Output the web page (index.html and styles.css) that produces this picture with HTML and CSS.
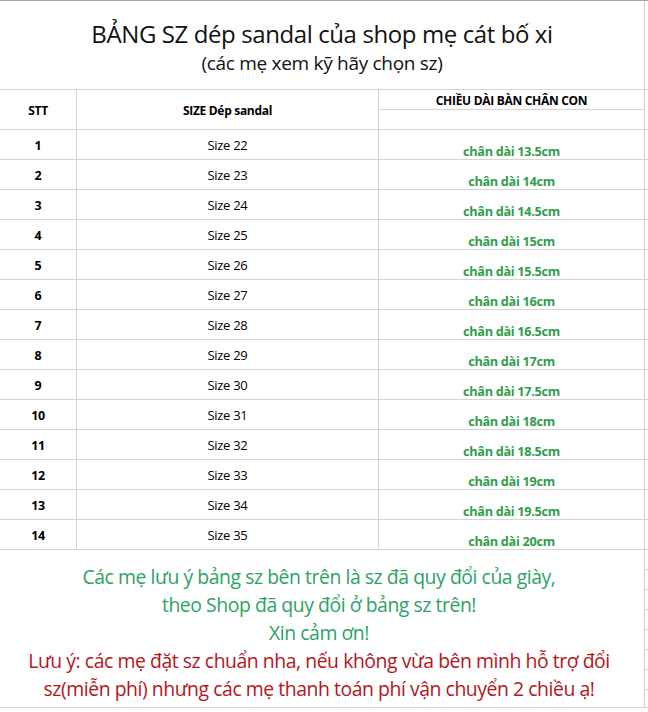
FILE: index.html
```html
<!DOCTYPE html>
<html lang="vi">
<head>
<meta charset="utf-8">
<title>Bảng size dép sandal</title>
<link rel="stylesheet" href="styles.css">
</head>
<body>
<div class="sheet">
  <div class="band title-band">
    <div class="title-block">
      <div class="title">BẢNG SZ dép sandal của shop mẹ cát bố xi</div>
      <div class="subtitle">(các mẹ xem kỹ hãy chọn sz)</div>
    </div>
    <div class="side"></div>
  </div>
  <div class="grid">
    <div class="cell head c1">STT</div>
    <div class="cell head c2">SIZE Dép sandal</div>
    <div class="cell head c3 split">
      <div class="split-top">CHIỀU DÀI BÀN CHÂN CON</div>
      <div class="split-bottom"></div>
    </div>
    <div class="cell pad"></div>

    <div class="cell num">1</div><div class="cell size">Size 22</div><div class="cell len">chân dài 13.5cm</div><div class="cell pad"></div>
    <div class="cell num">2</div><div class="cell size">Size 23</div><div class="cell len">chân dài 14cm</div><div class="cell pad"></div>
    <div class="cell num">3</div><div class="cell size">Size 24</div><div class="cell len">chân dài 14.5cm</div><div class="cell pad"></div>
    <div class="cell num">4</div><div class="cell size">Size 25</div><div class="cell len">chân dài 15cm</div><div class="cell pad"></div>
    <div class="cell num">5</div><div class="cell size">Size 26</div><div class="cell len">chân dài 15.5cm</div><div class="cell pad"></div>
    <div class="cell num">6</div><div class="cell size">Size 27</div><div class="cell len">chân dài 16cm</div><div class="cell pad"></div>
    <div class="cell num">7</div><div class="cell size">Size 28</div><div class="cell len">chân dài 16.5cm</div><div class="cell pad"></div>
    <div class="cell num">8</div><div class="cell size">Size 29</div><div class="cell len">chân dài 17cm</div><div class="cell pad"></div>
    <div class="cell num">9</div><div class="cell size">Size 30</div><div class="cell len">chân dài 17.5cm</div><div class="cell pad"></div>
    <div class="cell num">10</div><div class="cell size">Size 31</div><div class="cell len">chân dài 18cm</div><div class="cell pad"></div>
    <div class="cell num">11</div><div class="cell size">Size 32</div><div class="cell len">chân dài 18.5cm</div><div class="cell pad"></div>
    <div class="cell num">12</div><div class="cell size">Size 33</div><div class="cell len">chân dài 19cm</div><div class="cell pad"></div>
    <div class="cell num">13</div><div class="cell size">Size 34</div><div class="cell len">chân dài 19.5cm</div><div class="cell pad"></div>
    <div class="cell num">14</div><div class="cell size">Size 35</div><div class="cell len">chân dài 20cm</div><div class="cell pad"></div>
  </div>
  <div class="band notes-band">
    <div class="notes">
      <p class="note green">Các mẹ lưu ý bảng sz bên trên là sz đã quy đổi của giày,</p>
      <p class="note green">theo Shop đã quy đổi ở bảng sz trên!</p>
      <p class="note green">Xin cảm ơn!</p>
      <p class="note red">Lưu ý: các mẹ đặt sz chuẩn nha, nếu không vừa bên mình hỗ trợ đổi</p>
      <p class="note red">sz(miễn phí) nhưng các mẹ thanh toán phí vận chuyển 2 chiều ạ!</p>
    </div>
    <div class="side side-lines"></div>
  </div>
</div>
</body>
</html>
```
FILE: styles.css
```css
* { box-sizing: border-box; }
html, body { margin: 0; padding: 0; background: #fff; }
body {
  font-family: "Open Sans", "Noto Sans", sans-serif;
  color: #000;
  width: 648px;
  height: 712px;
  overflow: hidden;
}
.sheet {
  width: 648px;
  border-top: 1px solid #a6a6a6;
}
.band {
  display: flex;
}
.side {
  flex: 1;
  border-bottom: 1px solid #d4d4d4;
}
.side-lines {
  border-bottom: 1px solid #d4d4d4;
  background: repeating-linear-gradient(to bottom, transparent 0, transparent 19px, #d4d4d4 19px, #d4d4d4 20px);
}
.title-block {
  width: 645px;
  height: 89px;
  border-bottom: 1px solid #d4d4d4;
  border-right: 1px solid #cfcfcf;
  display: flex;
  flex-direction: column;
  align-items: center;
  padding-top: 18px;
}
.title {
  font-size: 24px;
  line-height: 30px;
  letter-spacing: -0.4px;
  color: #111;
}
.subtitle {
  font-size: 19px;
  line-height: 28px;
  letter-spacing: -0.3px;
  color: #111;
}
.grid {
  display: grid;
  grid-template-columns: 77px 302px 266px 1fr;
  grid-auto-rows: 30px;
  grid-template-rows: 40px;
}
.cell {
  border-right: 1px solid #d4d4d4;
  border-bottom: 1px solid #d4d4d4;
  display: flex;
  align-items: center;
  justify-content: center;
  font-size: 13px;
  letter-spacing: -0.3px;
}
.c3, .len { border-right-color: #cfcfcf; }
.pad { border-right: none; }
.head { font-weight: 700; font-size: 12px; padding-top: 1px; }
.split {
  flex-direction: column;
  align-items: stretch;
  justify-content: flex-start;
  padding-top: 0;
}
.split-top {
  height: 20px;
  border-bottom: 1px solid #d4d4d4;
  display: flex;
  align-items: center;
  justify-content: center;
  padding-top: 1px;
}
.split-bottom { flex: 1; }
.num { font-weight: 700; font-size: 12.5px; padding-top: 1px; }
.size { padding-top: 1px; }
.len {
  color: #2f9e4c;
  font-weight: 700;
  font-size: 12.7px;
  line-height: 14px;
  align-items: flex-end;
  padding-bottom: 1px;
}
.notes {
  width: 645px;
  height: 158px;
  border-bottom: 1px solid #d4d4d4;
  border-right: 1px solid #cfcfcf;
  padding-top: 13px;
}
.note {
  margin: 0;
  text-align: center;
  font-size: 19.4px;
  line-height: 28px;
  letter-spacing: -0.45px;
  padding-right: 6px;
}
.green { color: #2ca365; }
.red { color: #b3161b; }
```
